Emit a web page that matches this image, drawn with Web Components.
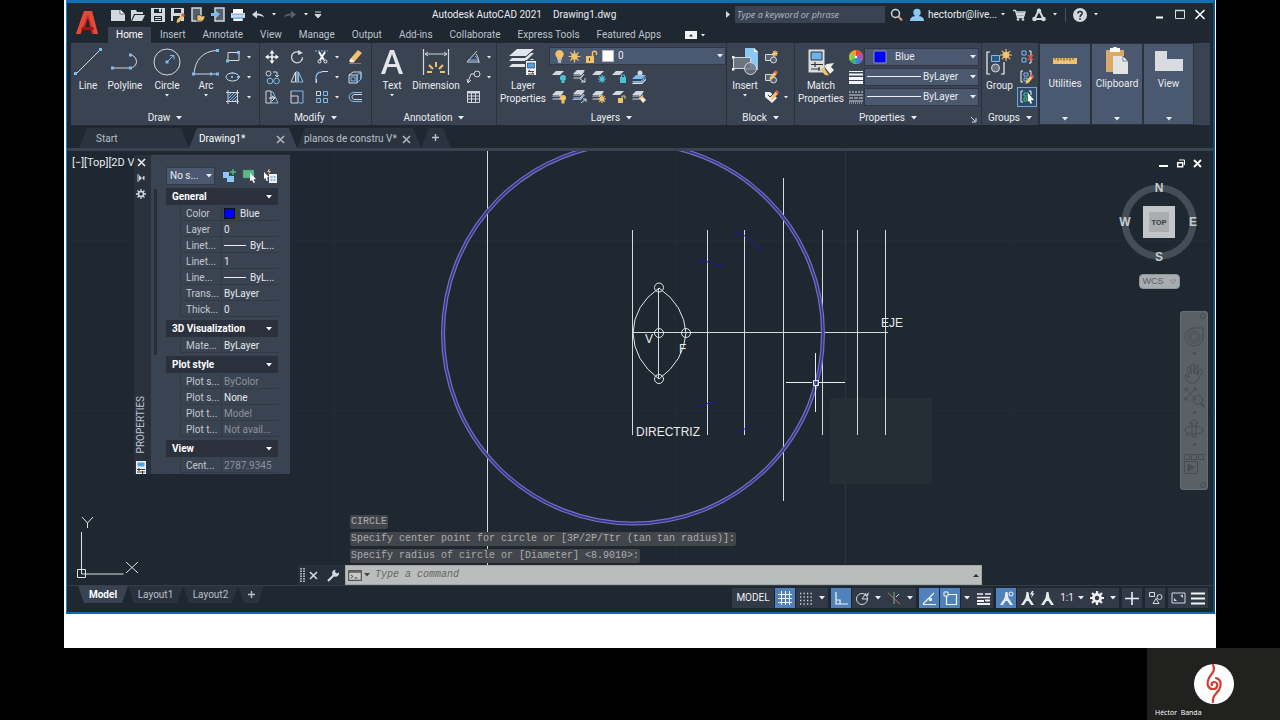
<!DOCTYPE html>
<html lang="en">
<head>
<meta charset="utf-8">
<title>Autodesk AutoCAD 2021 - Drawing1.dwg</title>
<style>
  html, body { margin: 0; height: 100%; background: #000; }
  body { font: 10px/12px Roboto, "Open Sans", "Liberation Sans", sans-serif; color: #e9ecf0; }
</style>
</head>
<body>
<cad-page></cad-page>
<script>
const L = '#d3d8de', B = '#79bdf2', Y = '#f2c26b', T = '#4cc0d4';
const layers = (x, y, c = L) => `<path d="M${x + 4} ${y}h8l-4 4h-8zM${x} ${y + 5.5}l1-1h6l3-3h1.500l-3.500 4zM${x} ${y + 8.500}l1-1h6l3.500-3.500h1l-3.500 4.500z" fill="${c}"/>`;
const sheet = (x, y) => `<path d="M${x + 4} ${y}h8l-4 4h-8z" fill="${L}"/>`;
const burst = (x, y, r, c = Y) => `<path d="M${x - r} ${y}h${2 * r}M${x} ${y - r}v${2 * r}M${x - r * .7} ${y - r * .7}l${r * 1.4} ${r * 1.4}M${x - r * .7} ${y + r * .7}l${r * 1.4} ${-r * 1.4}" stroke="${c}" stroke-width="1.200"/><circle cx="${x}" cy="${y}" r="${r * .55}" fill="${c}"/>`;
const pencil = (x, y) => `<path d="M${x} ${y + 6}l5-6 2.500 2-5 6-3 1z" fill="${Y}"/><path d="M${x + 4} ${y + 1}l1.500-2 2.500 2-1.500 2z" fill="#e0574f"/>`;
const annot = `<path d="M6.500 1h2l1 6 4.500 7h-3l-2.500-4h-2l-2.500 4h-3l4.500-7z" fill="#e8ebee"/>`;

const ICONS = {
  logo: [26, 28, `<path d="M2 25 10 2h8l6 23h-6l-2-6H9l-2 6z" fill="#c3281e"/><path d="M10 2h8l6 23h-4L14 5 6 25H2z" fill="#e2493b"/><path d="m14 9-3 9h5z" fill="#1f2730"/><path d="M8 18h11l1 3H7z" fill="#a01a14"/>`],
  fnew: [16, 14, `<path d="M1 2h9l5 4v7H1z" fill="${L}"/><path d="M10 1v5h5z" fill="#fff" stroke="#1f2730" stroke-width=".6"/>`],
  open: [16, 14, `<path d="M1 2h5l1 2h6v2H4l-3 7z" fill="${L}"/><path d="M5 7h10l-3 6H2z" fill="${L}"/>`],
  save: [16, 16, `<path d="M1 1h14v14H1z" fill="${L}"/><path d="M4 2h8v4H4zM4 9h8v5H4z" fill="#1f2730"/><path d="M9 2h2v3H9zM5 10h6v1H5zM5 12h6v1H5z" fill="${L}"/>`],
  saveas: [16, 16, `<path d="M1 1h13v13H1z" fill="${L}"/><path d="M4 2h7v4H4zM3 9h8v5H3z" fill="#1f2730"/>${pencil(7, 7)}`],
  openweb: [16, 16, `<path d="M2 1h9v13H2z" fill="#55606c" stroke="${L}" stroke-width="1.500"/><path d="M7 8h3l1 1h4v1l-2 4H7z" fill="${Y}" stroke="#1f2730" stroke-width=".6"/>`],
  saveweb: [16, 16, `<path d="M5 1h9v13H5z" fill="#55606c" stroke="${L}" stroke-width="1.500"/><path d="M1 6h5V4l4 3-4 4V9H1z" fill="${B}"/>`],
  print: [16, 16, `<path d="M3 2h10v4H3z" fill="#fff"/><path d="M1 6h14v5H1z" fill="${L}"/><path d="M2 7h12v1H2z" fill="${B}"/><path d="M3 10h10v4H3z" fill="${B}"/><path d="M4 12h8v2H4z" fill="#fff"/>`],
  undo: [16, 12, `<path d="M2 5.500 7 1.500v3c4 0 6 1 7 4-2-1.500-4-2-7-2v3z" fill="${L}"/>`],
  redo: [16, 12, `<path d="M14 5.500 9 1.500v3c-4 0-6 1-7 4 2-1.500 4-2 7-2v3z" fill="#56606c"/>`],
  drop: [6, 4, `<path d="M0 0h6L3 3.500z" fill="currentColor"/>`],
  tiny: [4, 3, `<path d="M0 0h4L2 2.500z" fill="currentColor"/>`],
  dropbar: [8, 8, `<path d="M1 1h6M1 3.500h6L4 7z" stroke="${L}" fill="${L}"/>`],
  right: [4, 7, `<path d="M0 0l4 3.500L0 7z" fill="${L}"/>`],
  search: [13, 13, `<circle cx="5.500" cy="5.500" r="4" fill="none" stroke="${L}" stroke-width="1.500"/><path d="m8.500 8.500 3.500 4" stroke="#d0a080" stroke-width="2"/>`],
  user: [14, 14, `<circle cx="7" cy="4.500" r="3.700" fill="#8cc8f4"/><path d="M0 13c0-4 3-5 7-5s7 1 7 5z" fill="#8cc8f4"/>`],
  cart: [13, 12, `<path d="M0 1.500h2.500l2 7H11M3 3h9L11 7H4" fill="none" stroke="${L}" stroke-width="1.300"/><path d="M4 4h7v2H4z" fill="${L}"/><circle cx="5" cy="10.500" r="1.300" fill="${L}"/><circle cx="10" cy="10.500" r="1.300" fill="${L}"/>`],
  appstore: [14, 14, `<path d="M7 2 2.500 11h9z" fill="none" stroke="${L}" stroke-width="2"/><circle cx="7" cy="3" r="2.300" fill="${L}"/><circle cx="2.500" cy="11" r="2.300" fill="${L}"/><circle cx="11.500" cy="11" r="2.300" fill="${L}"/>`],
  help: [14, 14, `<circle cx="7" cy="7" r="7" fill="${L}"/><path d="M4.800 5.500C5 2.500 9.500 3 9.200 5.500 9 7 7 7 7 9M7 10v1.800" fill="none" stroke="#1f2730" stroke-width="1.500"/>`],
  wmin: [12, 12, `<path d="M2 8.500h7" stroke="#fff" stroke-width="2"/>`],
  wmax: [12, 12, `<path d="M1.500 1.500h9v8h-9z" fill="none" stroke="${L}" /><path d="M1 1.500h10" stroke="${L}" stroke-width="1.500"/>`],
  wclose: [12, 12, `<path d="m1.500 1 9 9m0-9-9 9" stroke="#fff" stroke-width="1.600"/>`],
  collapse: [12, 8, `<rect width="12" height="8" fill="#f2f4f6"/><path d="M4 5.500 6 3l2 2.500z" fill="#333"/>`],
  line: [28, 28, `<path d="M2 26 26 2" stroke="${L}"/><path d="M0 24h3v3H0zM25 0h3v3h-3z" fill="${B}"/>`],
  polyline: [28, 28, `<path d="M2 20h17a6.500 6.500 0 0 0 0-13" fill="none" stroke="${L}"/><path d="M0 18.500h3v3H0zM18 18.500h3v3h-3zM18 5.500h3v3h-3z" fill="${B}"/>`],
  circle: [28, 28, `<circle cx="14" cy="14" r="13" fill="none" stroke="${L}"/><path d="m14 14 6-6M17 7.500h4v4" fill="none" stroke="${B}"/><path d="M12.500 12.500h3v3h-3z" fill="${B}"/>`],
  arc: [28, 28, `<path d="M2 26C3 12 11 3 25 2.500M2 26h24" fill="none" stroke="${L}"/><path d="M0 24.500h3v3H0zM24 24.500h3v3h-3zM24 1h3v3h-3zM18 24.500h2v3h-2z" fill="${B}"/>`],
  rect: [16, 14, `<path d="M3 2.500h11v8H3z" fill="none" stroke="${L}"/><path d="M1 9.500h3v3H1zM12 1h3v3h-3z" fill="${B}"/>`],
  ellipse: [16, 14, `<ellipse cx="7.500" cy="7" rx="6.500" ry="4" fill="none" stroke="${L}"/><path d="M6 6h2v2H6zM12 6h3v2h-3zM6.500 2h2v2h-2z" fill="${B}"/>`],
  hatch: [16, 14, `<path d="M1 2.500h13M1 11.500h13M3 0v14M12.500 0v14" stroke="${L}"/><path d="m4 5 2-2M4 8l5-5M4 11l8-8M7 11l5-5M10 11l2-2" stroke="${B}"/>`],
  move: [14, 14, `<path d="M7 2v10M2 7h10" stroke="#f2f4f6" stroke-width="1.500"/><path d="M7 0l2.500 3.500h-5zM7 14l2.500-3.500h-5zM0 7l3.500-2.500v5zM14 7l-3.500-2.500v5z" fill="#f2f4f6"/>`],
  rotate: [14, 14, `<path d="M9 2.200a5.500 5.500 0 1 0 3.500 5" fill="none" stroke="${L}" stroke-width="1.300"/><path d="M8 0v5l5-2z" fill="${L}"/>`],
  trim: [14, 14, `<path d="M0 1h13" stroke="${B}" stroke-dasharray="2 1"/><path d="m4 2 5 8m1-8-5 8" stroke="#f2f4f6" stroke-width="2"/><circle cx="4.500" cy="11.500" r="1.500" fill="none" stroke="#f2f4f6"/><circle cx="10.500" cy="11.500" r="1.500" fill="none" stroke="#f2f4f6"/>`],
  erase: [15, 15, `<path d="M3 8 10 0l4 3-7 8z" fill="${Y}"/><path d="m3 8 4 3-1.500 1.500h-3L1 11z" fill="#f5f0ea"/><path d="M1 13.500h12" stroke="#e0574f"/>`],
  copy: [15, 15, `<circle cx="3.500" cy="3.500" r="2.500" fill="none" stroke="${L}"/><path d="M8 2h4v4M10 5l2 2 2-2" fill="none" stroke="${L}"/><circle cx="5" cy="11" r="2.800" fill="none" stroke="${B}"/><circle cx="11.500" cy="11" r="2.800" fill="none" stroke="${B}"/>`],
  mirror: [14, 14, `<path d="M5.500 2v10H1z" fill="none" stroke="${L}"/><path d="M8.500 2v10H13z" fill="none" stroke="${B}"/><path d="M7 1v12" stroke="${L}"/>`],
  fillet: [14, 14, `<path d="M1 13V8c0-4 2-6 6-6" fill="none" stroke="${B}" stroke-width="1.300"/><path d="M7 1.500h6M1.500 9v4" stroke="${L}"/>`],
  box: [15, 15, `<path d="M1 5h8v8H1zM1 5l4-3h8v7l-4 4" fill="none" stroke="${L}"/><path d="M3 7h4v4H3zM9 5l4-3v7l-4 4z" fill="none" stroke="${B}"/>`],
  stretch: [15, 15, `<path d="M1 13V1h5v12z" fill="none" stroke="${L}"/><path d="M6 2h2l5 11H6" fill="none" stroke="${B}"/><path d="M4 8h5M7 6l3 2-3 3" fill="none" stroke="#f2f4f6"/>`],
  scale: [15, 15, `<path d="M1 1h12v12H9" fill="none" stroke="${B}"/><path d="M1 6h7v7H1zM1 6V1" fill="none" stroke="${L}"/>`],
  array: [14, 14, `<path d="M1.500 1.500h4v4h-4z" fill="none" stroke="${L}"/><path d="M8.500 1.500h4v4h-4zM1.500 8.500h4v4h-4zM8.500 8.500h4v4h-4z" fill="none" stroke="${B}"/>`],
  offset: [15, 14, `<path d="M14 2.500H6C-.500 2.500-.500 11.500 6 11.500h8" fill="none" stroke="${B}"/><path d="M14 4.500H7c-4 0-4 5 0 5h7" fill="none" stroke="${L}"/>`],
  text: [24, 24, `<path d="M1 24 10 0h4l9 24h-4l-2.500-7h-9L5 24zM8.500 14h7L12 4z" fill="#e2e6ea"/>`],
  dimension: [28, 28, `<path d="M1.500 1v26M26.500 1v26" stroke="${L}" stroke-width="1.200"/><path d="M3 6h22M6 4 3 6l3 2M22 4l3 2-3 2" fill="none" stroke="${L}"/><path d="M5 24h5M18 24h5M7 17l4 4M21 17l-4 4M14 14v5" stroke="${Y}" stroke-width="2"/>`],
  angle: [15, 14, `<path d="M1 12h13M1 12 11 1M10 4c2 2 2.500 5 2.500 8" fill="none" stroke="${L}"/><path d="M9 6l3 3M2 10h10" stroke="${B}"/>`],
  leader: [15, 14, `<circle cx="11" cy="4" r="3" fill="none" stroke="${L}"/><path d="M8 4H5L2 12m-1-3 1 4 3-3" fill="none" stroke="${L}"/>`],
  table: [15, 14, `<path d="M1.500 1.500h12v11h-12zM1.500 6h12M1.500 9h12M5.500 3v9M9.500 3v9" fill="none" stroke="${L}"/><path d="M1 1h13v2.500H1z" fill="${L}"/>`],
  layerprops: [28, 28, `<path d="M8 1h17l-8 7H0zM0 13l3-3h13l6-5h3l-8 8zM0 19l3-3h13l6-5h3l-8 8z" fill="#e2e6ea"/><path d="M16.500 12.500h11v15h-11z" fill="#eef0f2" stroke="#3a4352"/><path d="M18.500 15h7v5h-7z" fill="#4da3e8" stroke="#333" stroke-width=".6"/><path d="M19 23.500h6M19 26h6M21 22l-2 1.500M23 24.500l2 1.500" stroke="#444"/>`],
  bulb: [9, 13, `<path d="M4.500 0a4.200 4.200 0 0 0-2.500 7.500V9h5V7.500A4.200 4.200 0 0 0 4.500 0z" fill="${Y}"/><path d="M2.500 10h4M3 12h3" stroke="${L}" stroke-width="1.500"/>`],
  sun: [13, 13, burst(6.5, 6.5, 6)],
  unlock: [13, 13, `<path d="M1 6h8v7H1z" fill="${Y}"/><path d="M7.500 6V3c0-2.500 4-2.500 4 0v2" fill="none" stroke="${Y}" stroke-width="1.500"/><path d="M4.500 8v3" stroke="#444"/>`],
  white: [12, 12, `<path d="M.5.500h11v11H.500z" fill="#fff" stroke="#b9bec4"/>`],
  blue: [14, 14, `<path d="M1 1h12v12H1z" fill="#00f" stroke="#8d96a6"/>`],
  lay1: [15, 14, `${sheet(0, 1)}<circle cx="11" cy="8" r="3" fill="${T}"/><path d="M9.500 11h3v2h-3z" fill="${T}"/>`],
  lay2: [15, 14, `${layers(1, 0)}<path d="m8 9 5 3m0-4v4H9" fill="none" stroke="${L}"/>`],
  lay3: [15, 14, `${sheet(0, 1)}${burst(10, 9, 4, T)}`],
  lay4: [15, 14, `${sheet(0, 1)}<path d="M8 7h6v6H8z" fill="${T}"/><path d="M9.500 7V5h3v2" fill="none" stroke="${T}"/>`],
  lay5: [15, 14, `<circle cx="8" cy="3" r="2.500" fill="#e0d8d0"/><path d="M4 5h10l-4 4H0zM0 12l1-1h8l4-4h1l-4 5z" fill="${B}"/><path d="M0 14l1-1.500h9l4-4v1.500l-4 4z" fill="#e2e6ea"/>`],
  lay6: [15, 14, `${layers(0, 1)}<circle cx="11" cy="8" r="3" fill="${Y}"/><path d="M9.500 11h3v2.500h-3z" fill="${Y}"/>`],
  lay7: [15, 14, `${layers(1, 0)}<path d="M0 10l1-1h7l4-4h1l-4 5z" fill="${B}"/><path d="m9 13 5-4m-3 0h3v3" fill="none" stroke="${L}"/>`],
  lay8: [15, 14, `${layers(0, 1)}${burst(10, 9, 4)}`],
  lay9: [15, 14, `${sheet(0, 1)}<path d="M6 8h5v5H6z" fill="${Y}"/><path d="M10 8V6h3v3" fill="none" stroke="${Y}"/>`],
  lay10: [15, 14, `${layers(0, 1)}<path d="m7 8 3-2 4 4-3 3z" fill="#f4ead6"/><path d="m7 8 3-2 1.500 1.500-3 2z" fill="${Y}"/>`],
  insert: [27, 28, `<path d="M13 0h9l4 4v18H13z" fill="#8cc8f4"/><path d="M22 0v4h4z" fill="#fff"/><path d="M1.500 9.500h17v11h-17z" fill="#6c7480" stroke="${L}"/><circle cx="18.500" cy="20.500" r="6" fill="#6c7480" fill-opacity=".8" stroke="${L}" /><path d="M0 8h2.500v2.500H0zM0 20h2.500v2.500H0z" fill="#fff"/>`],
  blkc: [15, 14, `<path d="M1.500 4.500h8v6h-8z" fill="#59626e" stroke="${L}"/><circle cx="9.500" cy="10" r="3" fill="#59626e" stroke="${L}"/>${burst(11, 3.500, 3)}`],
  blke: [15, 14, `<path d="M1.500 4.500h8v6h-8z" fill="#59626e" stroke="${L}"/><circle cx="9.500" cy="10" r="3" fill="#59626e" stroke="${L}"/>${pencil(6, 1)}`],
  attr: [15, 14, `<path d="M1 2h5l7 6-5 5-7-6z" fill="#eef0f2"/><path d="m4 5 2 2 4-4" stroke="#333" fill="none"/>${pencil(7, 1)}`],
  match: [28, 28, `<path d="M1.500 1.500h16v23h-16z" fill="#d9dde1"/><path d="M4 4h11v8H4z" fill="#6db4ee" stroke="#333"/><path d="M4 16.500h12M4 21h9M8 14v5M12 19v4" stroke="#333" stroke-width="1.200"/><path d="m13 21 5 6 4 .500-5-8z" fill="${Y}"/><path d="m17 18 3-2 7-1-3 4 3 3-4 4z" fill="#f2f0ec"/>`],
  wheel: [14, 14, `<circle cx="7" cy="7" r="7" fill="#f0a030"/><path d="M7 7V0a7 7 0 0 1 6 3.500z" fill="#e8453c"/><path d="m7 7 6-3.500a7 7 0 0 1 0 7z" fill="#a64fc0"/><path d="m7 7 6 3.500A7 7 0 0 1 7 14z" fill="#3f7fe0"/><path d="M7 7v7a7 7 0 0 1-6-3.500z" fill="#35b080"/><path d="m7 7-6 3.500a7 7 0 0 1 0-7z" fill="#8fd04a"/><circle cx="7" cy="7" r="1.200" fill="#fff"/>`],
  lweight: [14, 14, `<path d="M0 1.500h14" stroke="#f2f4f6"/><path d="M0 4.500h14" stroke="#f2f4f6" stroke-width="2"/><path d="M0 8.500h14M0 12.500h14" stroke="#f2f4f6" stroke-width="3"/>`],
  ltype: [14, 14, `<path d="M0 2h14" stroke="${L}" stroke-dasharray="2 1"/><path d="M0 5h14M0 11h14" stroke="${L}"/><path d="M0 8h14" stroke="${L}" stroke-dasharray="4 1"/><path d="M0 13h14" stroke="${L}" stroke-dasharray="1 1"/>`],
  stroke: [54, 4, `<path d="M0 1.500h54" stroke="#eceff2"/>`],
  stroke2: [22, 3, `<path d="M0 1.500h22" stroke="#eceff2"/>`],
  dlg: [6, 6, `<path d="m0 0 4 4M5 1v4H1" fill="none" stroke="${L}"/>`],
  group: [28, 28, `<path d="M4 4H1v22h3M15 26h3v-12" fill="none" stroke="#f2f4f6" stroke-width="1.200"/><path d="M5.500 7.500h8v6h-8z" fill="#2d5a85" stroke="${B}"/><circle cx="9.500" cy="20" r="4" fill="#6c7480" stroke="${L}"/>${burst(20, 7, 6)}`],
  ungroup: [15, 14, `<path d="M2 1h4v4H2zM2 8h4v4H2z" fill="none" stroke="${B}"/><path d="M9 1h2v12H9" fill="none" stroke="#f2f4f6"/><path d="m8 5 5 5m0-5-5 5" stroke="#e8453c" stroke-width="1.500"/>`],
  gedit: [15, 14, `<path d="M3 1H1v11h2M9 1h2v8" fill="none" stroke="#f2f4f6"/><path d="M4 3h4v3H4zM4 8h3v3H4z" fill="none" stroke="${B}"/>${pencil(6, 5)}`],
  gsel: [15, 14, `<path d="M3 1H1v11h2M9 1h2v4" fill="none" stroke="#f2f4f6"/><path d="M4 3h4v3H4zM4 8h3v3H4z" fill="none" stroke="#49c77c"/><path d="m8 3 6 7-3 .2 1 3-1.500.600-1.300-3L8 12z" fill="#fff"/>`],
  ruler: [24, 26, `<path d="M0 10h24v6H0z" fill="${Y}"/><path d="M2 10v2M5 10v3M8 10v2M11 10v3M14 10v2M17 10v3M20 10v2" stroke="#6b5330"/>`],
  clipboard: [24, 28, `<path d="M1 3h18v22H1z" fill="#dba868"/><path d="M5 1h3c0-2 4-2 4 0h3v4H5z" fill="#f6f7f8"/><path d="M8 9h10l5 5v13H8z" fill="#e2e4e6"/><path d="M18 9v5h5z" fill="#fff" stroke="#333" stroke-width=".6"/>`],
  view: [28, 22, `<path d="M0 1h12v8h16v12H0z" fill="#d8dce0"/>`],
  x: [9, 9, `<path d="m1 1 7 7m0-7L1 8" stroke="currentColor" stroke-width="1.600"/>`],
  plus: [9, 9, `<path d="M4.500 1v7M1 4.500h7" stroke="currentColor" stroke-width="1.400"/>`],
  pin: [8, 8, `<path d="M1 0v8M7 2v4" stroke="${L}"/><path d="M2 1v6l3-3zM7 2v4L5 4z" fill="${L}"/>`],
  gear8: [10, 10, `<circle cx="5" cy="5" r="2.500" fill="none" stroke="${L}" stroke-width="1.500"/><path d="M5 0v2M5 8v2M0 5h2M8 5h2M1.500 1.500 3 3M7 7l1.500 1.500M8.500 1.500 7 3M3 7 1.500 8.500" stroke="${L}" stroke-width="1.300"/>`],
  palicon: [10, 13, `<path d="M0 0h10v13H0z" fill="#eef0f2"/><path d="M1.500 1.500h7v4h-7z" fill="#4da3e8"/><path d="M1 8.500h8M1 11h8M3 7v3M6.500 10v3" stroke="#333"/>`],
  pickadd: [14, 14, `<path d="M1 3h6v6H1zM5 7h7v6H5z" fill="#8cc8f4"/><path d="M11 0v6M8 3h6" stroke="#49c77c" stroke-width="1.300"/>`],
  selobj: [15, 14, `<path d="M1 1h11v8H1z" fill="#5bb88a" stroke="#3f8464" stroke-dasharray="1 1"/><path d="m8 4 6 6-2.500.300 1.500 3-1.500.600-1.300-3L8 12z" fill="#fff"/>`],
  qsel: [15, 14, `<path d="m1 3 5 5-2 .5 1 3-1.500.5-1-3L1 10z" fill="#fff"/><path d="M6 5h8v9H6z" fill="#eef0f2"/><path d="M7.500 8h2M7.500 11h2M10.500 8h2M10.500 11h2" stroke="#2f7fc8"/><path d="M6 0 4 3h2L5 6l3-4H6l1-2z" fill="${Y}"/>`],
  grip: [5, 15, `<path d="M1 0v15M4 0v15" stroke="${L}" stroke-width="1.500" stroke-dasharray="1.500 1"/>`],
  wrench: [13, 13, `<path d="M1 12 8 5" stroke="${L}" stroke-width="2.200"/><path d="M12 3.500A3.500 3.500 0 1 1 8.500.700L8 3l2 1.500z" fill="${L}"/>`],
  prompt: [14, 11, `<path d="M.7.700h12.600v9.600H.700z" fill="#c6c8c9" stroke="#555" stroke-width="1.200"/><path d="M1 2h12" stroke="#555" stroke-width="1.500"/><path d="m3 5 2 1.500L3 8M6.500 8h3" fill="none" stroke="#444"/>`],
  up: [6, 3, `<path d="M0 3 3 0l3 3z" fill="#333"/>`],
  mmin: [9, 9, `<path d="M0 7h9" stroke="#fff" stroke-width="2"/>`],
  mres: [9, 9, `<path d="M1.700 3.700h5v4h-5z" fill="none" stroke="#fff" stroke-width="1.500"/><path d="M3 1h5.500v5" fill="none" stroke="#fff"/>`],
  mx: [9, 9, `<path d="m1 1 7 7m0-7L1 8" stroke="#fff" stroke-width="1.800"/>`],
  grid: [14, 14, `<path d="M3.500 0v14M7.500 0v14M11.500 0v14M0 3.500h14M0 7.500h14M0 11.500h14" stroke="#f2f4f6"/>`],
  snap: [14, 14, `<path d="M1 2.500h12M1 6h12M1 9.500h12M1 13h12" stroke="${L}" stroke-width="1.300" stroke-dasharray="1.300 2.200"/>`],
  ortho: [15, 15, `<path d="M2 1v12h12M2 9h4v4" fill="none" stroke="#f2f4f6" stroke-width="1.200"/>`],
  polar: [15, 15, `<circle cx="7" cy="8" r="5.500" fill="none" stroke="${L}"/><path d="M7 8h6M7 8l4-6" stroke="${L}"/><path d="m10 5 4-4-1 4z" fill="${L}"/>`],
  iso: [14, 14, `<path d="M7 1v12" stroke="#6fb58a"/><path d="m1 2 12 11" stroke="#d06a6a"/><path d="M9 6l3-3" stroke="${L}"/>`],
  track: [15, 15, `<path d="m1 13 11-11M1 13.500h13" stroke="#f2f4f6" stroke-width="1.200"/><path d="M7 7h3v3H7z" fill="#dfe8f4"/>`],
  osnap: [15, 15, `<path d="M3.500 3.500h10v10h-10z" fill="none" stroke="#f2f4f6" stroke-width="1.200"/><path d="M1 1h4v4H1z" fill="#4f81bd" stroke="#f2f4f6"/>`],
  lwt: [15, 13, `<path d="M1 2h6M9 2h6M1 5.500h13" stroke="#eef0f2" stroke-width="1.500"/><path d="M1 9h7M9 8.500h5M1 12h13" stroke="#eef0f2" stroke-width="2"/>`],
  an1: [15, 15, `${annot}<circle cx="12" cy="3" r="2" fill="none" stroke="#eef0f2"/>`],
  an2: [15, 15, `${annot}<path d="m12 0-2 3.500h2L11 7l3.500-4.500h-2l1-2.500z" fill="#eef0f2"/>`],
  an3: [15, 15, annot],
  gear: [14, 14, `<circle cx="7" cy="7" r="3.600" fill="none" stroke="#eef0f2" stroke-width="2.800"/><path d="M7 0v3M7 11v3M0 7h3M11 7h3M2 2l2 2M10 10l2 2M12 2l-2 2M4 10l-2 2" stroke="#eef0f2" stroke-width="2.200"/>`],
  bigplus: [14, 14, `<path d="M7 1v13M0 7.500h14" stroke="#eef0f2" stroke-width="1.600"/>`],
  shapes: [15, 14, `<path d="M1.500 1.500h5v4h-5zM5 12.500l3-5 3 5z" fill="none" stroke="${L}"/><circle cx="11.500" cy="6" r="2.500" fill="none" stroke="${L}"/>`],
  full: [15, 12, `<path d="M1 1h13v10H1z" fill="none" stroke="${L}"/><path d="M3 9V6l3 3zM12 3v3L9 3z" fill="${L}"/>`],
  menu: [14, 13, `<path d="M0 1.500h14M0 6.500h14M0 11.500h14" stroke="#f4f5f6" stroke-width="2"/>`]
};

/* Registers an element whose shadow root holds the given styles and markup. */
function define(name, css, html) {
  customElements.define(name, class extends HTMLElement {
    constructor() {
      super();
      const t = document.createElement('template');
      t.innerHTML = `<style>*{box-sizing:border-box}button{all:unset;box-sizing:border-box}${css}</style>${html}`;
      this.attachShadow({ mode: 'open' }).append(t.content.cloneNode(true));
    }
  });
}
const ic = n => `<cad-icon name="${n}"></cad-icon>`;
const btn = (n, label, cls = '') => `<button class="${cls}" aria-label="${label}">${ic(n)}</button>`;

customElements.define('cad-icon', class extends HTMLElement {
  connectedCallback() {
    if (this.shadowRoot) return;
    const [w, h, m] = ICONS[this.getAttribute('name')];
    this.attachShadow({ mode: 'open' }).innerHTML =
      `<style>:host{display:inline-flex;flex:none}svg{display:block}</style><svg width="${w}" height="${h}" viewBox="0 0 ${w} ${h}" fill="none" aria-hidden="true">${m}</svg>`;
  }
});

/* Ribbon button: large with a label, or small with the icon only. */
customElements.define('cad-tool', class extends HTMLElement {
  connectedCallback() {
    if (this.shadowRoot) return;
    const label = this.getAttribute('label'), icon = this.getAttribute('icon');
    const big = this.hasAttribute('big');
    this.attachShadow({ mode: 'open' }).innerHTML = `<style>
      :host{display:flex;justify-content:center;min-width:0}
      button{all:unset;display:flex;flex-direction:column;align-items:center}
      button.small{height:20px;width:100%;justify-content:center}
      .i{height:30px;display:flex;align-items:center}
      .l{margin-top:2px;line-height:13px;text-align:center;width:min-content}
      .d{display:flex;margin-top:2px}
      :host([active]) button.small{background:#2f4a68;outline:1px solid #6aa9e0;outline-offset:-1px}
    </style>` + (big
      ? `<button><span class="i">${ic(icon)}</span><span class="l">${label}</span>${this.hasAttribute('caret') ? `<span class="d">${ic('tiny')}</span>` : ''}</button>`
      : `<button class="small" aria-label="${label}">${ic(icon)}</button>`);
  }
});

customElements.define('cad-panel', class extends HTMLElement {
  connectedCallback() {
    if (this.shadowRoot) return;
    this.attachShadow({ mode: 'open' }).innerHTML = `<style>
      :host{display:flex;flex-direction:column;background:#3a4352;border-right:1px solid #2a313d;padding-top:4px;min-width:0}
      .body{flex:1;display:grid;grid-template-columns:var(--cols);grid-template-rows:20px 20px 20px;align-content:start}
      footer{display:flex;height:16px;padding-top:1px;box-sizing:border-box;align-items:center;justify-content:center;gap:6px;position:relative}
      .dlg{position:absolute;right:4px;top:5px}
    </style><div class="body"><slot></slot></div>
    <footer>${this.getAttribute('label')} ${ic('drop')}${this.hasAttribute('dialog') ? `<span class="dlg">${ic('dlg')}</span>` : ''}</footer>`;
  }
});

customElements.define('cad-folded', class extends HTMLElement {
  connectedCallback() {
    if (this.shadowRoot) return;
    const label = this.getAttribute('label');
    this.attachShadow({ mode: 'open' }).innerHTML = `<style>
      :host{display:block;background:#4a5870;margin:1px 1px}
      button{all:unset;box-sizing:border-box;width:100%;height:100%;display:flex;flex-direction:column;align-items:center;padding:3px 0 1px}
      .i{height:28px;display:flex;align-items:center;margin-bottom:3px}
      .d{display:flex;margin-top:auto;padding-bottom:2px}
    </style><button><span class="i">${ic(this.getAttribute('icon'))}</span><span>${label}</span><span class="d">${ic('drop')}</span></button>`;
  }
});

customElements.define('cad-combo', class extends HTMLElement {
  connectedCallback() {
    if (this.shadowRoot) return;
    this.attachShadow({ mode: 'open' }).innerHTML = `<style>
      :host{display:flex;align-items:center;height:18px;background:#4a5870;border:1px solid #303846;box-sizing:border-box;position:relative;gap:var(--gap,2px);padding-left:var(--pad,2px)}
      select{all:unset;flex:1;min-width:0;font:inherit;line-height:16px;color:inherit;white-space:nowrap;padding-right:8px;box-sizing:border-box}
      .c{position:absolute;right:2px;top:6px;pointer-events:none;display:flex}
    </style><slot></slot><select aria-label="${this.getAttribute('label')}"><option>${this.getAttribute('value')}</option></select><span class="c">${ic('drop')}</span>`;
  }
});

define('cad-titlebar', `
  :host{display:flex;align-items:center;height:23px}
  button{display:flex;align-items:center;justify-content:center;width:20px;height:20px}
  .qat{display:flex;width:324px;align-items:center}
  button.w12{width:12px}
  .title{display:flex;gap:11px;flex:1;white-space:pre}
  .search{display:flex;align-items:center;gap:5px}
  input{all:unset;box-sizing:border-box;width:150px;height:17px;background:#3a4352;padding:0 2px;font:italic 9px/17px "Open Sans",sans-serif;color:#b4bac2}
  input::placeholder{color:#b4bac2;opacity:1}
  button.mag{width:22px}button.user{width:102px;gap:4px;padding-left:3px;justify-content:flex-start}
  .sep{width:1px;height:14px;background:#47505c;margin:0 4px}
  .win{display:flex;margin-left:48px;padding-right:3px}
`, `<div class="qat">${btn('fnew', 'New')}${btn('open', 'Open')}${btn('save', 'Save')}${btn('saveas', 'Save As')}${btn('openweb', 'Open from Web')}${btn('saveweb', 'Save to Web')}${btn('print', 'Plot')}${btn('undo', 'Undo')}${btn('tiny', 'Undo list', 'w12')}${btn('redo', 'Redo')}${btn('tiny', 'Redo list', 'w12')}${btn('dropbar', 'Customize', 'w12')}</div>
  <div class="title"><span>Autodesk AutoCAD 2021</span><span>Drawing1.dwg</span></div>
  <div class="search">${ic('right')}<input type="text" aria-label="Search" placeholder="Type a keyword or phrase"></div>
  ${btn('search', 'Search', 'mag')}<button class="user">${ic('user')}<span>hectorbr@live...</span>${ic('tiny')}</button>
  ${btn('cart', 'Cart')}${btn('appstore', 'Autodesk App Store')}${btn('tiny', 'Apps', 'w12')}<span class="sep"></span>${btn('help', 'Help')}${btn('tiny', 'Help menu', 'w12')}
  <div class="win">${btn('wmin', 'Minimize')}${btn('wmax', 'Maximize')}${btn('wclose', 'Close')}</div>`);

define('cad-menu', `
  :host{display:block}
  nav{display:flex;align-items:stretch;gap:1px;height:16px}
  a{color:#bcc3cb;text-decoration:none;padding:0 8px;line-height:16px;white-space:nowrap}
  a.on{background:#3a4352;color:#fff}
  button{display:flex;align-items:center;margin-left:15px;gap:4px}
`, `<nav>${['Home', 'Insert', 'Annotate', 'View', 'Manage', 'Output', 'Add-ins', 'Collaborate', 'Express Tools', 'Featured Apps'].map((t, i) => `<a href="#"${i ? '' : ' class="on"'}>${t}</a>`).join('')}<button aria-label="Minimize ribbon">${ic('collapse')}${ic('tiny')}</button></nav>`);

const small = (n, l, x = '') => `<cad-tool icon="${n}" label="${l}" ${x}></cad-tool>`;
const big = (n, l, x = '') => `<cad-tool class="big" big icon="${n}" label="${l}" ${x}></cad-tool>`;
define('cad-ribbon', `
  :host{display:grid;grid-template-columns:189px 112px 125px 230px 68px 187px 57px 52px 52px 51px 1fr;height:82px;margin:0 3px 0 4px;background:#2a313d}
  .big{grid-row:1 / 4}
  .rest{background:#3a4352}
  cad-combo.layer{grid-column:2 / 8;--gap:4px;--pad:5px}
  cad-combo.prop{--pad:8px;--gap:8px;margin:1px 0}
  cad-combo.ln{--pad:2px;--gap:2px}
`, `
<cad-panel label="Draw" style="--cols:34px 40px 44px 34px 20px 12px">${big('line', 'Line')}${big('polyline', 'Polyline')}${big('circle', 'Circle', 'caret')}${big('arc', 'Arc', 'caret')}${small('rect', 'Rectangle')}${small('tiny', 'Rectangle list')}${small('ellipse', 'Ellipse')}${small('tiny', 'Ellipse list')}${small('hatch', 'Hatch')}${small('tiny', 'Hatch list')}</cad-panel>
<cad-panel label="Modify" style="--cols:24px 26px 24px 6px 30px">${small('move', 'Move')}${small('rotate', 'Rotate')}${small('trim', 'Trim')}${small('tiny', 'Trim list')}${small('erase', 'Erase')}${small('copy', 'Copy')}${small('mirror', 'Mirror')}${small('fillet', 'Fillet')}${small('tiny', 'Fillet list')}${small('box', 'Explode')}${small('stretch', 'Stretch')}${small('scale', 'Scale')}${small('array', 'Array')}${small('tiny', 'Array list')}${small('offset', 'Offset')}</cad-panel>
<cad-panel label="Annotation" style="--cols:40px 48px 26px 6px">${big('text', 'Text', 'caret')}${big('dimension', 'Dimension')}${small('angle', 'Angular')}${small('tiny', 'Angular list')}${small('leader', 'Leader')}${small('tiny', 'Leader list')}${small('table', 'Table')}</cad-panel>
<cad-panel label="Layers" style="--cols:52px 20px 20px 20px 20px 20px 1fr">${big('layerprops', 'Layer Properties')}
  <cad-combo class="layer" label="Layer" value="0">${ic('bulb')}${ic('sun')}${ic('unlock')}${ic('white')}</cad-combo>
  ${[1, 2, 3, 4, 5].map(n => small('lay' + n, 'Layer tool ' + n)).join('')}<span></span>${[6, 7, 8, 9, 10].map(n => small('lay' + n, 'Layer tool ' + n)).join('')}</cad-panel>
<cad-panel label="Block" style="--cols:36px 16px 14px">${big('insert', 'Insert', 'caret')}${small('blkc', 'Create block')}<span></span>${small('blke', 'Edit block')}<span></span>${small('attr', 'Edit attributes')}${small('tiny', 'Attributes list')}</cad-panel>
<cad-panel label="Properties" dialog style="--cols:52px 17px 1fr 2px">${big('match', 'Match Properties')}
  ${small('wheel', 'Object color')}<cad-combo class="prop" label="Color" value="Blue">${ic('blue')}</cad-combo><span></span>
  ${small('lweight', 'Lineweight')}<cad-combo class="prop ln" label="Lineweight" value="ByLayer">${ic('stroke')}</cad-combo><span></span>
  ${small('ltype', 'Linetype')}<cad-combo class="prop ln" label="Linetype" value="ByLayer">${ic('stroke')}</cad-combo></cad-panel>
<cad-panel label="Groups" style="--cols:35px 20px">${big('group', 'Group')}${small('ungroup', 'Ungroup')}${small('gedit', 'Group edit')}${small('gsel', 'Group selection', 'active')}</cad-panel>
<cad-folded icon="ruler" label="Utilities"></cad-folded><cad-folded icon="clipboard" label="Clipboard"></cad-folded><cad-folded icon="view" label="View"></cad-folded><span class="rest"></span>`);

define('cad-doctabs', `
  :host{display:flex;align-items:flex-end;height:26px;padding-left:12px;border-bottom:3px solid #3a4352}
  .t{display:flex;align-items:center;justify-content:space-between;height:20px;padding-top:2px;background:#2b333e;color:#b9c0c8;clip-path:polygon(8px 0,calc(100% - 8px) 0,100% 100%,0 100%)}
  .t button{white-space:nowrap}
  .on{background:#3a4352;color:#fff}
  .x{display:flex;color:#b0b6be}
  .s{width:110px;padding-left:17px}.d{width:108px;padding-left:10px;padding-right:12px}.p{width:124px;padding-left:7px;padding-right:10px}.n{width:30px;padding-left:10px}
`, `<div class="t s"><button>Start</button></div><div class="t d on"><button>Drawing1*</button><button class="x" aria-label="Close Drawing1">${ic('x')}</button></div><div class="t p"><button>planos de constru V*</button><button class="x" aria-label="Close planos">${ic('x')}</button></div><div class="t n"><button aria-label="New tab">${ic('plus')}</button></div>`);

const vline = (x, a, b) => `<path d="M${x}.5 ${a}v${b - a}"/>`;
define('cad-drawing', `
  :host{display:block;position:absolute;inset:0;overflow:hidden}
  svg{display:block;width:100%;height:100%}
  text{font:12px "Liberation Sans",Arial,sans-serif;fill:#e8eaec}
`, `<svg viewBox="67 151 1146 434" preserveAspectRatio="xMidYMid slice" fill="none">
  <path d="M165.500 151v434M334.500 151v434M675.500 151v434M1013.500 151v434M67 240.500h1146M67 410.500h1146" stroke="#232c35"/><path d="M845.500 151v434" stroke="#2c3640"/>
  <path d="M830 398h102v86H830z" fill="#252d35"/>
  <g stroke="#d6dadd">${vline(487, 151, 585)}${vline(632, 230, 435)}${vline(707, 230, 435)}${vline(744, 230, 435)}${vline(783, 178, 501)}${vline(822, 230, 435)}${vline(857, 230, 435)}${vline(885, 230, 435)}${vline(658, 288, 379)}<path d="M633 332.500h255"/></g>
  <g stroke="#e4e6e8"><path d="M659 288Q634 305 633 333 634 361 659 379M659 288Q684 305 686 333 684 361 659 379"/><circle cx="659" cy="287.500" r="4.500"/><circle cx="659" cy="333" r="4.500"/><circle cx="686" cy="333" r="4.500"/><circle cx="659" cy="379" r="4.500"/></g>
  <g stroke="#1b1bab"><path d="M698 259l26 8M733 231l12 5 18 14M696 407l20-6M737 433l13-7"/></g>
  <circle cx="633" cy="333.500" r="190" stroke="#7472b4" stroke-width="4"/><circle cx="633" cy="333.500" r="190" stroke="#352f94" stroke-width="1.600"/>
  <g stroke="#eceef0"><path d="M786 382.500h26M819 382.500h26M815.500 353v27M815.500 386v26M813.500 380.500h5v5h-5z"/></g>
  <text x="881" y="327">EJE</text><text x="645" y="343">V</text><text x="679" y="353">F</text><text x="636" y="436">DIRECTRIZ</text>
  <g stroke="#dfe2e5"><path d="M81.500 532v42h42M77.500 569.500h8v8h-8zM126 562l12 11M138 562l-12 11M82 517l5.500 6 5.500-6M87.500 523v5"/></g>
</svg>`);

const row = (l, v, c = '') => `<tr><td class="g"></td><th scope="row">${l}</th><td class="${c}">${v}</td></tr>`;
const sec = (t, rows) => `<table><colgroup><col class="c1"><col class="c2"><col></colgroup><thead><tr><th colspan="3"><span class="h">${t}${ic('drop')}</span></th></tr></thead><tbody>${rows}</tbody></table>`;
const lineVal = t => `<span class="v">${ic('stroke2')}${t}</span>`;
define('cad-palette', `
  :host{display:flex;background:#3a4352;width:156px;height:319px;overflow:hidden}
  .bar{width:17px;background:#2a313d;display:flex;flex-direction:column;align-items:center;gap:7px;padding:3px 3px 0 0}
  .bar button{display:flex}
  .name{writing-mode:vertical-rl;transform:rotate(180deg);margin-top:auto;margin-bottom:1px;color:#bcc3cb}
  .scroll{width:3px;height:166px;margin:34px 0 0 3px;background:#272e39}
  .main{flex:1;padding:11px 12px 0 9px;min-width:0}
  .tools{display:flex;align-items:center;height:20px;gap:6px;margin-bottom:2px}
  .tools button{display:flex}
  cad-combo{width:50px;--pad:3px;margin-right:1px}
  table{width:112px;border-collapse:separate;border-spacing:0;table-layout:fixed;margin-bottom:3px}
  .c1{width:14px}.c2{width:41px}
  thead th{height:17px;background:#2a313d;color:#fff;font-weight:bold;text-align:left;padding:1px 6px 0}
  .h{display:flex;justify-content:space-between;align-items:center}
  tbody td,tbody th{height:16px;padding:2px 0 0 2px;border:solid #323a47;border-width:0 0 1px 1px;font-weight:normal;text-align:left;white-space:nowrap;line-height:13px;color:#e6e9ec}
  tbody th{color:#c3c9d0;padding-left:5px}
  tbody td.g{border-color:#3a4352;padding:0}
  tbody td.dim{color:#8b929b}
  .v{display:flex;align-items:center;gap:4px}
  .sw{width:11px;height:11px;background:#00f;border:1px solid #111;margin-right:1px}
`, `<div class="bar">${btn('x', 'Close palette')}${btn('pin', 'Auto-hide')}${btn('gear8', 'Palette settings')}<span class="name">PROPERTIES</span>${ic('palicon')}</div>
<div class="scroll"></div>
<div class="main"><div class="tools"><cad-combo label="Selection" value="No s..."></cad-combo>${btn('pickadd', 'Toggle PICKADD')}${btn('selobj', 'Select objects')}${btn('qsel', 'Quick select')}</div>
${sec('General', row('Color', '<span class="v"><i class="sw"></i>Blue</span>') + row('Layer', '0') + row('Linet...', lineVal('ByL...')) + row('Linet...', '1') + row('Line...', lineVal('ByL...')) + row('Trans...', 'ByLayer') + row('Thick...', '0'))}
${sec('3D Visualization', row('Mate...', 'ByLayer'))}
${sec('Plot style', row('Plot s...', 'ByColor', 'dim') + row('Plot s...', 'None') + row('Plot t...', 'Model', 'dim') + row('Plot t...', 'Not avail...', 'dim'))}
${sec('View', row('Cent...', '2787.9345', 'dim'))}</div>`);

define('cad-viewcube', `
  :host{display:flex;flex-direction:column;align-items:center;gap:7px;width:84px}
  text{font:bold 12px "Liberation Sans",sans-serif;fill:#c8ccd0;text-anchor:middle}
  .top{font:bold 8px Roboto,sans-serif;fill:#3d4246}
  button{display:flex;align-items:center;gap:5px;width:41px;height:15px;border-radius:4px;background:#a9adb2;border:1px solid #8e9398;color:#5b6065;padding-left:3px;font:9px/13px "Liberation Sans",sans-serif}
`, `<svg width="84" height="88" viewBox="0 0 84 88" fill="none"><circle cx="42" cy="43" r="34" stroke="#454d56" stroke-width="7"/><path d="M26 27h32v32H26z" fill="#c3c6c8"/><path d="M32 33h20v20H32z" fill="#abaeb1"/><text class="top" x="42" y="46">TOP</text><text x="42" y="13">N</text><text x="42" y="82">S</text><text x="8" y="47">W</text><text x="76" y="47">E</text></svg><button>WCS<svg width="8" height="6" fill="none"><path d="M1 1h6L4 5z" stroke="#8c9196"/></svg></button>`);

define('cad-navbar', `
  :host{display:block;width:28px;border-radius:3px;background:#596167}
  svg{display:block}
`, `<svg width="28" height="179" viewBox="0 0 28 179" fill="none" stroke="#454c52"><rect x=".5" y=".5" width="27" height="178" rx="3" stroke="#666e74"/><circle cx="23" cy="5" r="2.500"/><circle cx="23" cy="174" r="2.500"/>
<path d="M14 17h9v9a9 9 0 1 1-9-9z"/><circle cx="14" cy="26" r="6"/><circle cx="14" cy="26" r="3.500"/><path d="M13 42h3l-1.500 2z" fill="#454c52"/>
<path d="M8 70c-3-3-4-6-2-6l3 3-2-10c1-2 3-1 3 1l1 5 0-9c1-2 3-1 3 0v9l2-8c1-2 3-1 2 1l-1 8 3-5c2-1 3 0 2 2l-4 8-4 3H10z"/>
<path d="M5 77l11 12M16 77L5 89M5 80v-3h3M13 77h3v3M5 86v3h3"/><circle cx="18" cy="89" r="4.500"/><path d="m21 92 3 4" stroke-width="2"/><path d="M13 101h3l-1.500 2z" fill="#454c52"/>
<ellipse cx="14" cy="119" rx="9" ry="4"/><path d="M12 126v-14h-2l4-4 4 4h-2v14zM8 121l-2 3 4 1"/><path d="M13 133h3l-1.500 2z" fill="#454c52"/>
<path d="M4.500 143.500h5v5h-5zM11.500 143.500h5v5h-5zM18.500 143.500h5v5h-5zM4.500 150.500h13v12h-13z"/><path d="M8 153v7l6-3.500z" fill="#454c52"/></svg>`);

define('cad-command', `
  :host{display:block}
  .log{margin:0 0 2px 52px;display:flex;flex-direction:column;align-items:flex-start;gap:3px}
  .log span{background:#42464a;color:#a9adb1;font:10px/14px "Liberation Mono",monospace;padding:0 1px;border-radius:2px;white-space:pre}
  .bar{display:flex;height:20px}
  .side{display:flex;align-items:center;width:47px;gap:4px;padding-left:2px;background:#27303a;color:#d3d8de}
  .side button{display:flex}.side button+button{margin-left:5px}
  .in{flex:1;display:flex;align-items:center;background:#bbbdbd;border:1px solid #a4a6a7;padding:0 2px;color:#444;gap:2px}
  input{all:unset;flex:1;font:italic 10px/18px "Liberation Mono",monospace;color:#666;margin-left:3px}
  input::placeholder{color:#636668;opacity:1}
`, `<div class="log"><span>CIRCLE</span><span>Specify center point for circle or [3P/2P/Ttr (tan tan radius)]:</span><span>Specify radius of circle or [Diameter] &lt;8.9010&gt;:</span></div>
<div class="bar"><div class="side">${ic('grip')}${btn('x', 'Close command line')}${btn('wrench', 'Customize')}</div><div class="in">${ic('prompt')}${ic('drop')}<input type="text" aria-label="Command" placeholder="Type a command">${ic('up')}</div></div>`);

define('cad-viewport', `
  :host{display:block;position:relative;background:#1f2730;overflow:hidden}
  .label{position:absolute;left:5px;top:6px;white-space:nowrap;font-size:11px}
  cad-palette{position:absolute;left:67px;top:4px}
  .mdi{position:absolute;right:11px;top:8px;display:flex;gap:8px}
  .mdi button{display:flex}
  cad-viewcube{position:absolute;right:12px;top:28px}
  cad-navbar{position:absolute;right:5px;top:160px}
  cad-command{position:absolute;left:231px;right:231px;bottom:0}
`, `<cad-drawing></cad-drawing><span class="label">[−][Top][2D V</span><cad-palette></cad-palette>
<div class="mdi">${btn('mmin', 'Minimize drawing')}${btn('mres', 'Restore drawing')}${btn('mx', 'Close drawing')}</div><cad-viewcube></cad-viewcube><cad-navbar></cad-navbar><cad-command></cad-command>`);

const st = (n, l, c) => `<button class="${c}" aria-label="${l}">${ic(n)}</button>`;
define('cad-status', `
  :host{display:flex;justify-content:space-between;height:27px;background:#1f2730;border-top:1px solid #343c48;padding:0 5px 0 11px}
  .tabs{display:flex;height:17px}
  .tabs button{width:55px;background:#2a323d;color:#b9c0c8;line-height:17px;clip-path:polygon(0 0,100% 0,calc(100% - 6px) 100%,6px 100%);display:flex;justify-content:center;align-items:center}
  .tabs button.on{background:#3a4352;color:#fff;font-weight:bold;width:50px}
  .tabs button.add{width:26px}
  .st{display:flex;height:20px;margin-top:2px}
  .st button{display:flex;align-items:center;justify-content:center;background:#323a47;height:20px;width:20px}
  .st button.model{width:42px;color:#f0f2f4;margin-right:1px}
  .st button.on{background:#4f81bd;margin-right:1px}
  .st button.n{width:12px}
  .st button.sc{width:30px;gap:4px;white-space:nowrap}
  .st .g{margin-left:3px}
`, `<div class="tabs"><button class="on">Model</button><button>Layout1</button><button>Layout2</button><button class="add" aria-label="New layout">${ic('plus')}</button></div>
<div class="st"><button class="model">MODEL</button>${st('grid', 'Grid', 'on')}${st('snap', 'Snap', '')}${st('drop', 'Snap list', 'n')}${st('ortho', 'Ortho', 'on g')}${st('polar', 'Polar', '')}${st('drop', 'Polar list', 'n')}${st('iso', 'Isodraft', '')}${st('drop', 'Isodraft list', 'n')}${st('track', 'Tracking', 'on g')}${st('osnap', 'Object snap', 'on')}${st('drop', 'Object snap list', 'n')}${st('lwt', 'Lineweight', '')}${st('an1', 'Annotation visibility', 'on g')}${st('an2', 'Auto scale', '')}${st('an3', 'Annotation scale', '')}<button class="sc">1:1${ic('drop')}</button>${st('gear', 'Workspace', '')}${st('drop', 'Workspace list', 'n')}${st('bigplus', 'Monitor', 'g')}${st('shapes', 'Isolate', 'g')}${st('full', 'Clean screen', 'g')}${st('menu', 'Customization', '')}</div>`);

define('cad-window', `
  :host{display:flex;flex-direction:column;background:#1f2730;border:1px solid #0f86cf;border-top:3px solid #1173b4;border-bottom-width:2px;border-right:2px solid #0c4f83;border-bottom-color:#0f6cab}
  header{display:grid;grid-template-columns:41px 1fr;grid-template-rows:24px 16px}
  .logo{grid-row:1 / 3;display:flex;align-items:center;justify-content:center;padding-right:2px}
  cad-viewport{flex:1}
`, `<header><span class="logo">${ic('logo')}</span><cad-titlebar></cad-titlebar><cad-menu></cad-menu></header><cad-ribbon></cad-ribbon><cad-doctabs></cad-doctabs><cad-viewport></cad-viewport><cad-status></cad-status>`);

define('cad-participant', `
  :host{display:flex;flex-direction:column;align-items:center;justify-content:flex-end;gap:4px;width:133px;height:72px;background:#212120;color:#fff}
  svg{display:block}
  .n{align-self:flex-start;margin-left:8px;font:7px/9px "Open Sans",sans-serif;padding-bottom:3px;white-space:pre}
`, `<svg width="40" height="40" viewBox="0 0 40 40" fill="none"><circle cx="20" cy="20" r="20" fill="#fff"/><g stroke="#d63a2c" stroke-linecap="round"><path d="M19 1c3 6-2 9-4 13-3 6-1 11 4 11 5 0 6-7 1-7-2 0-3 2-2 3" stroke-width="2.200"/><path d="M22 14c5 1 6 7 3 12-3 4-7 6-6 12" stroke-width="2.200"/></g></svg><span class="n">Héctor  Banda</span>`);

define('cad-page', `
  :host{display:flex;flex-direction:column;min-height:100vh;background:#000}
  .share{flex:1;display:flex;flex-direction:column;margin:0 5%;background:#fff;padding:0 1px 34px 2px}
  cad-window{flex:1}
  footer{display:flex;justify-content:flex-end}
`, `<div class="share"><cad-window></cad-window></div><footer><cad-participant></cad-participant></footer>`);
</script>
</body>
</html>
